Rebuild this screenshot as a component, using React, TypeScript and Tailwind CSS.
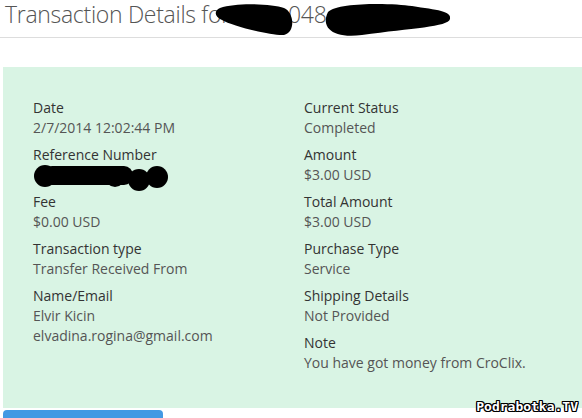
import React from 'react';

type Field = { label: string; values?: string[]; redacted?: boolean };

const left: Field[] = [
  { label: 'Date', values: ['2/7/2014 12:02:44 PM'] },
  { label: 'Reference Number', redacted: true },
  { label: 'Fee', values: ['$0.00 USD'] },
  { label: 'Transaction type', values: ['Transfer Received From'] },
  { label: 'Name/Email', values: ['Elvir Kicin', 'elvadina.rogina@gmail.com'] },
];

const right: Field[] = [
  { label: 'Current Status', values: ['Completed'] },
  { label: 'Amount', values: ['$3.00 USD'] },
  { label: 'Total Amount', values: ['$3.00 USD'] },
  { label: 'Purchase Type', values: ['Service'] },
  { label: 'Shipping Details', values: ['Not Provided'] },
  { label: 'Note', values: ['You have got money from CroClix.'] },
];

function RefBlob() {
  // marker scribble over the reference number
  return (
    <svg width="140" height="30" viewBox="0 0 140 30" className="block">
      <g fill="#000">
        <circle cx="12" cy="14" r="11" />
        <rect x="10" y="4" width="90" height="19" rx="9" />
        <circle cx="82" cy="15" r="10" />
        <circle cx="106" cy="18" r="11" />
        <circle cx="124" cy="15" r="11" />
      </g>
    </svg>
  );
}

function Column({ items }: { items: Field[] }) {
  return (
    <div className="flex flex-col gap-[7px]">
      {items.map((f) => (
        <div key={f.label}>
          <div className="text-[#333]">{f.label}</div>
          {f.redacted ? (
            <div className="-mt-[3px] h-[23px]">
              <RefBlob />
            </div>
          ) : (
            f.values?.map((v) => (
              <div key={v} className="text-[#555]">
                {v}
              </div>
            ))
          )}
        </div>
      ))}
    </div>
  );
}

export default function App() {
  return (
    <div className="relative h-[418px] w-[582px] overflow-hidden bg-white font-['Open_Sans',sans-serif]">
      <div className="relative">
        <h1 className="whitespace-nowrap pl-[5px] text-[23px] font-light leading-[28px] tracking-[-0.3px] text-[#555]">
          Transaction Details for
          <span className="absolute left-[288px] top-0">048</span>
        </h1>
        <svg className="absolute left-[212px] top-0" width="300" height="40" viewBox="0 0 300 40">
          <g fill="#000">
            <path d="M8 8 C25 2 60 4 72 8 C82 12 84 32 72 35 C60 36 20 26 10 20 C2 16 2 11 8 8 Z" />
            <path d="M116 12 C126 2 180 3 200 6 C225 10 240 11 238 19 C236 27 200 28 150 35 C122 39 108 28 116 12 Z" />
          </g>
        </svg>
      </div>
      <div className="mt-[9px] h-px bg-[#ddd]" />

      <div className="ml-[3px] mt-[29px] h-[341px] bg-[#d9f4e4] pl-[30px] pt-[31px] text-[14px] leading-[20px]">
        <div className="grid grid-cols-[271px_1fr]">
          <Column items={left} />
          <Column items={right} />
        </div>
      </div>

      <div className="ml-[3px] mt-[2px] h-[20px] w-[160px] rounded-t-[4px] bg-[#4299e3]" />

      <div
        className="absolute bottom-[2px] right-[4px] font-['DejaVu_Sans_Mono',monospace] text-[13px] font-bold text-white"
        style={{ textShadow: '1px 0 #000, -1px 0 #000, 0 1px #000, 0 -1px #000, 1px 1px #000, -1px -1px #000, 1px -1px #000, -1px 1px #000' }}
      >
        Podrabotka.TV
      </div>
    </div>
  );
}
